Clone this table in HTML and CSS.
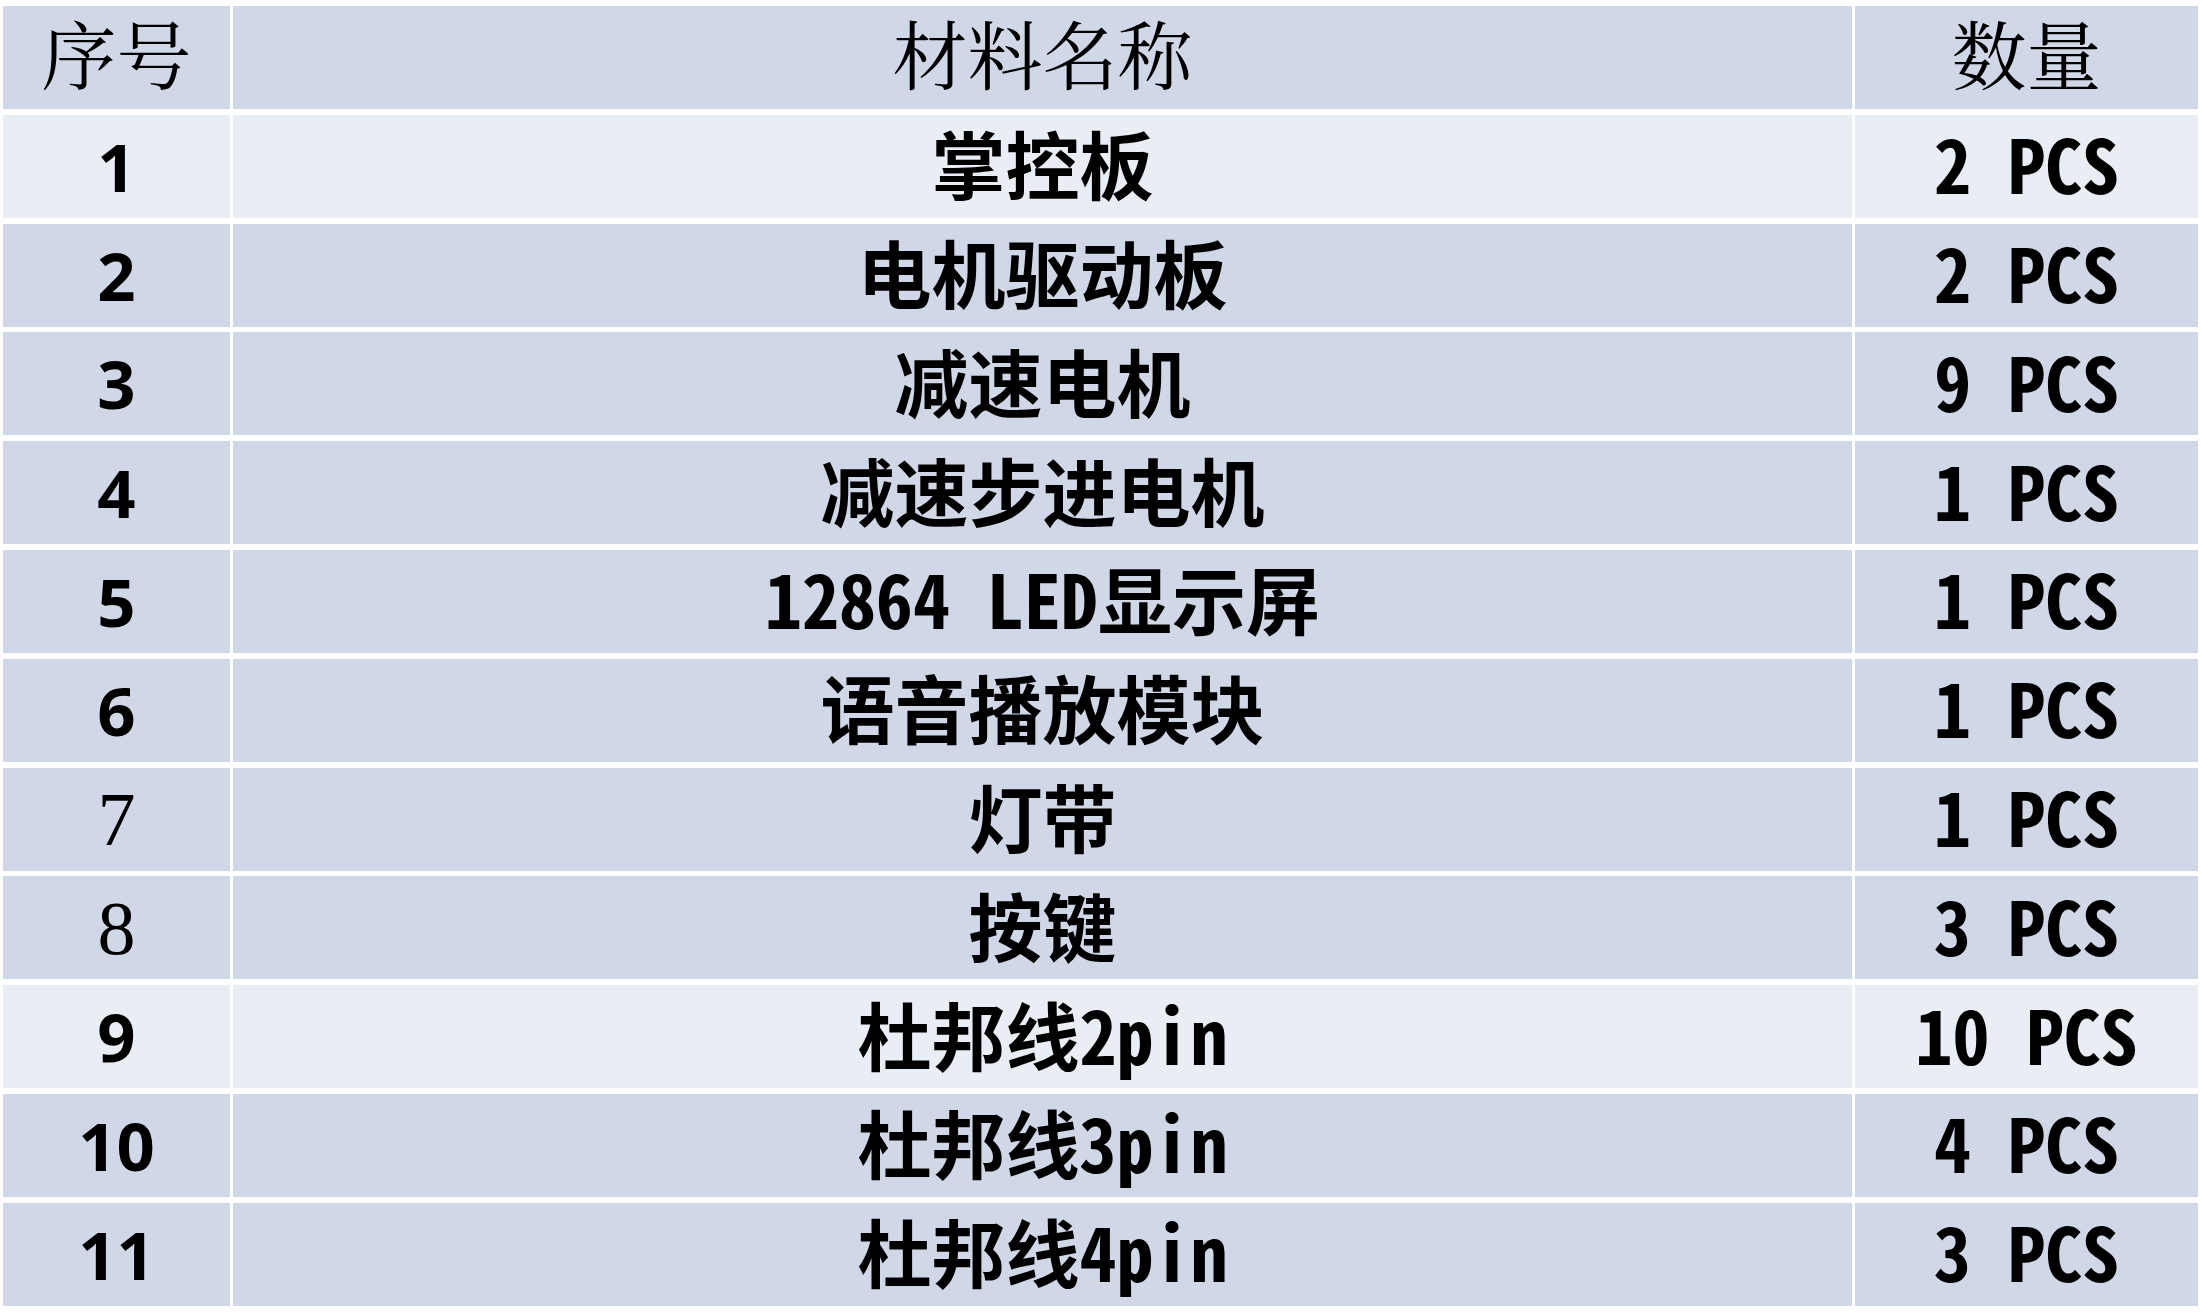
FILE: index.html
```html
<!DOCTYPE html>
<html lang="zh-CN">
<head>
<meta charset="utf-8">
<title>材料清单</title>
<link rel="stylesheet" href="styles.css">
</head>
<body>
<div class="table">
  <div class="row head">
    <div class="cell c1">序号</div>
    <div class="cell c2">材料名称</div>
    <div class="cell c3">数量</div>
  </div>
  <div class="row light">
    <div class="cell c1">1</div>
    <div class="cell c2">掌控板</div>
    <div class="cell c3">2 PCS</div>
  </div>
  <div class="row">
    <div class="cell c1">2</div>
    <div class="cell c2">电机驱动板</div>
    <div class="cell c3">2 PCS</div>
  </div>
  <div class="row">
    <div class="cell c1">3</div>
    <div class="cell c2">减速电机</div>
    <div class="cell c3">9 PCS</div>
  </div>
  <div class="row">
    <div class="cell c1">4</div>
    <div class="cell c2">减速步进电机</div>
    <div class="cell c3">1 PCS</div>
  </div>
  <div class="row">
    <div class="cell c1">5</div>
    <div class="cell c2">12864 LED显示屏</div>
    <div class="cell c3">1 PCS</div>
  </div>
  <div class="row">
    <div class="cell c1">6</div>
    <div class="cell c2">语音播放模块</div>
    <div class="cell c3">1 PCS</div>
  </div>
  <div class="row">
    <div class="cell c1 serif">7</div>
    <div class="cell c2">灯带</div>
    <div class="cell c3">1 PCS</div>
  </div>
  <div class="row">
    <div class="cell c1 serif">8</div>
    <div class="cell c2">按键</div>
    <div class="cell c3">3 PCS</div>
  </div>
  <div class="row light">
    <div class="cell c1">9</div>
    <div class="cell c2">杜邦线2pin</div>
    <div class="cell c3">10 PCS</div>
  </div>
  <div class="row">
    <div class="cell c1">10</div>
    <div class="cell c2">杜邦线3pin</div>
    <div class="cell c3">4 PCS</div>
  </div>
  <div class="row">
    <div class="cell c1">11</div>
    <div class="cell c2">杜邦线4pin</div>
    <div class="cell c3">3 PCS</div>
  </div>
</div>
</body>
</html>
```

FILE: styles.css
```css
html, body {
  margin: 0;
  padding: 0;
  background: #ffffff;
}

.table {
  display: flex;
  flex-direction: column;
  gap: 5.8px;
  padding: 6px 4px 6px 3px;
}

.row {
  display: grid;
  grid-template-columns: 227px 1619px 343px;
  column-gap: 3px;
  height: 103px;
}

.cell {
  display: flex;
  align-items: center;
  justify-content: center;
  background: #d0d8e8;
  color: #000000;
  line-height: 1;
  white-space: pre;
}

.row.light .cell {
  background: #e9edf4;
}

.c1 {
  font-family: "Open Sans", "Lato", sans-serif;
  font-weight: 700;
  font-size: 67px;
}

.c1.serif {
  font-family: "Liberation Serif", serif;
  font-weight: 400;
  font-size: 76px;
}

.c2, .c3 {
  font-family: "Noto Sans Mono CJK SC", "Noto Sans CJK SC", sans-serif;
  font-weight: 700;
  font-size: 74px;
  padding-bottom: 8px;
}

.head .cell {
  font-family: "Noto Serif CJK SC", "AR PL UMing CN", "Noto Sans CJK SC", serif;
  font-weight: 400;
  font-size: 75px;
  padding-bottom: 12px;
}
```
